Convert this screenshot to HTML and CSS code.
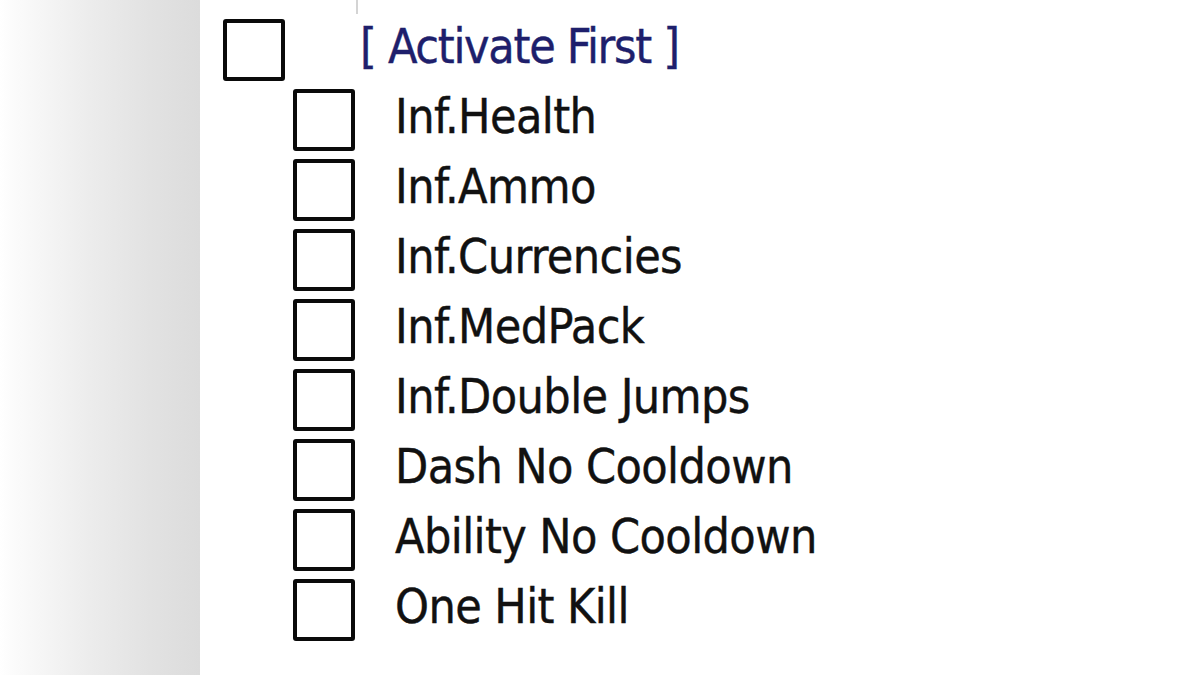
FILE: index.html
```html
<!DOCTYPE html>
<html lang="en">
<head>
  <meta charset="UTF-8">
  <meta name="viewport" content="width=device-width, initial-scale=1.0">
  <title>Cheat Table</title>
  <link rel="stylesheet" href="styles.css">
</head>
<body>
  <div class="shade"></div>
  <div class="panel">
    <div class="stub"><span class="stub-line"></span></div>
    <ul class="tree">
      <li class="row group">
        <span class="box"></span>
        <span class="label header">[ Activate First ]</span>
      </li>
      <li class="row child"><span class="box"></span><span class="label">Inf.Health</span></li>
      <li class="row child"><span class="box"></span><span class="label">Inf.Ammo</span></li>
      <li class="row child"><span class="box"></span><span class="label">Inf.Currencies</span></li>
      <li class="row child"><span class="box"></span><span class="label">Inf.MedPack</span></li>
      <li class="row child"><span class="box"></span><span class="label">Inf.Double Jumps</span></li>
      <li class="row child"><span class="box"></span><span class="label">Dash No Cooldown</span></li>
      <li class="row child"><span class="box"></span><span class="label">Ability No Cooldown</span></li>
      <li class="row child"><span class="box"></span><span class="label">One Hit Kill</span></li>
    </ul>
  </div>
</body>
</html>
```

FILE: styles.css
```css
body {
  margin: 0;
  height: 675px;
  display: flex;
  background-color: #fff;
  font-family: "DejaVu Sans Condensed", "DejaVu Sans", sans-serif;
  overflow: hidden;
}
.shade {
  width: 200px;
  flex-shrink: 0;
  background: linear-gradient(to right, #fff 0px, #fbfbfb 15px, #ececec 90px, #e2e2e2 150px, #dcdcdc 200px);
}
.panel {
  flex: 1;
  background-color: #fff;
}
.stub {
  height: 15px;
  padding-left: 156px;
}
.stub-line {
  display: block;
  width: 2px;
  height: 14px;
  background-color: #d4d4d4;
}
.tree {
  list-style: none;
  margin: 0;
  padding: 0 0 0 23px;
}
.row {
  height: 70px;
  display: flex;
  align-items: center;
}
.row.child {
  padding-left: 70px;
}
.box {
  width: 62px;
  height: 62px;
  box-sizing: border-box;
  border: 4px solid #0a0a0a;
  border-radius: 3px;
  flex-shrink: 0;
}
.label {
  font-size: 48px;
  color: #111;
  letter-spacing: -0.6px;
  -webkit-text-stroke: 0.4px #111;
  padding-bottom: 8px;
  margin-left: 40px;
  white-space: nowrap;
}
.label.header {
  color: #1e1f6c;
  -webkit-text-stroke: 0.4px #1e1f6c;
  letter-spacing: -1.3px;
  margin-left: 75px;
}
```
